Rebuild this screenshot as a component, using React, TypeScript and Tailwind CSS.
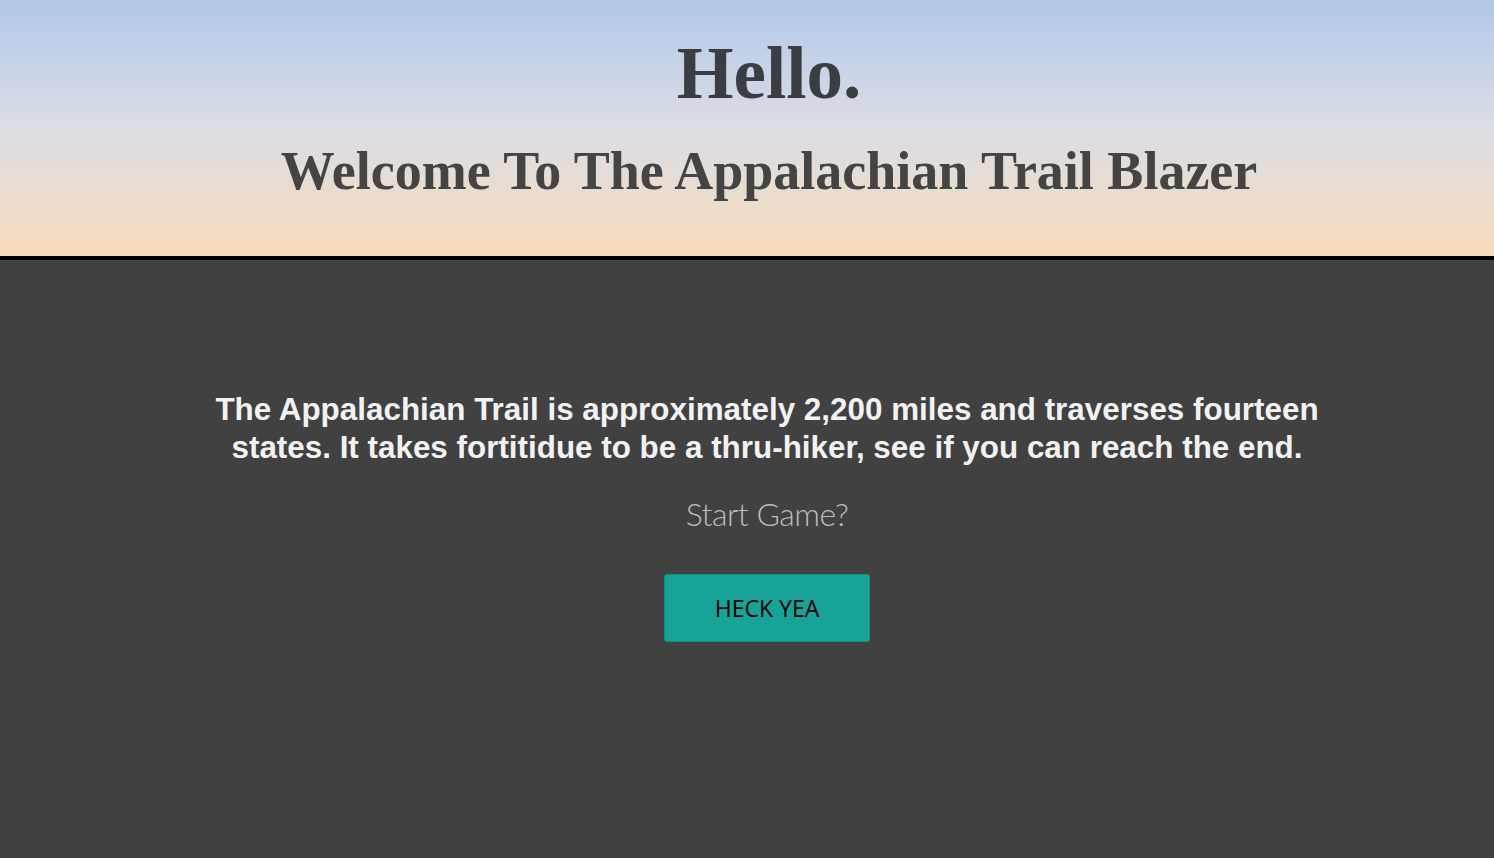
import React from "react";

export default function App() {
  return (
    <div className="min-h-[858px] w-full bg-[#414141] flex flex-col">
      <header className="h-[260px] border-b-4 border-black bg-gradient-to-b from-[#b1c8e8] via-[#dcdde4] to-[#f6dcbb] flex flex-col items-center text-center pl-[44px]">
        <h1 className="mt-[34px] text-[73px] leading-[80px] font-bold text-[#3a3d42] font-['Liberation_Serif',serif]">
          Hello.
        </h1>
        <h2 className="mt-[27px] text-[54px] leading-[60px] font-bold text-[#444444] font-['Liberation_Serif',serif]">
          Welcome To The Appalachian Trail Blazer
        </h2>
      </header>
      <main className="flex flex-col items-center text-center pl-[40px]">
        <p className="mt-[131px] text-[31.4px] leading-[38px] font-bold text-[#f2f2f2] font-['Liberation_Sans',Arial,sans-serif]">
          The Appalachian Trail is approximately 2,200 miles and traverses fourteen
          <br />
          states. It takes fortitidue to be a thru-hiker, see if you can reach the end.
        </p>
        <p className="mt-[27px] text-[32px] leading-[40px] font-light tracking-[-0.5px] text-[#bdbdbd] font-['Lato','Liberation_Sans',sans-serif]">
          Start Game?
        </p>
        <button className="mt-[40px] w-[206px] h-[68px] bg-[#17a398] border border-[#139287] rounded-[3px] text-[23px] font-medium text-black font-['Open_Sans',sans-serif]">
          HECK YEA
        </button>
      </main>
    </div>
  );
}
